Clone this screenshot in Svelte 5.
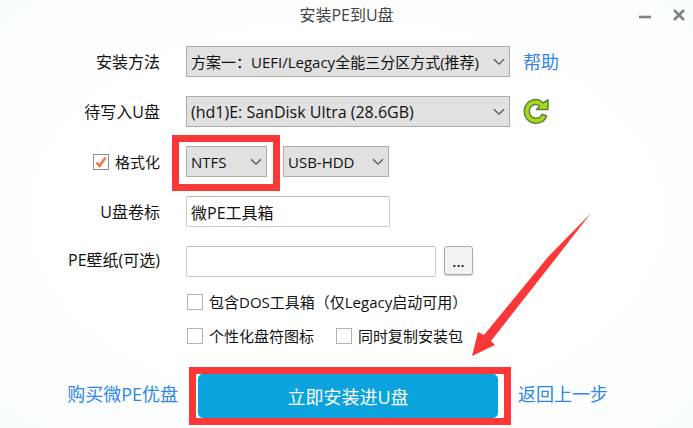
<script lang="ts">
    const methods = ['方案一：UEFI/Legacy全能三分区方式(推荐)'];
    const drives = ['(hd1)E: SanDisk Ultra (28.6GB)'];
    const fileSystems = ['NTFS', 'exFAT', 'FAT32'];
    const bootModes = ['USB-HDD', 'USB-ZIP'];

    let method = $state(methods[0]);
    let drive = $state(drives[0]);
    let format = $state(true);
    let fileSystem = $state('NTFS');
    let bootMode = $state('USB-HDD');
    let volumeLabel = $state('微PE工具箱');
    let wallpaper = $state('');
    let includeDos = $state(false);
    let customIcon = $state(false);
    let copyInstaller = $state(false);
</script>

{#snippet dropdown(id: string, options: string[], value: string, label: string, onpick: (v: string) => void)}
    <div class="select">
        <select {id} {value} aria-label={label} onchange={(e) => onpick(e.currentTarget.value)}>
            {#each options as option}
                <option value={option}>{option}</option>
            {/each}
        </select>
        <svg class="chevron" viewBox="0 0 12 8" aria-hidden="true">
            <path d="M1 1.2 6 6.2l5-5" />
        </svg>
    </div>
{/snippet}

<div class="window">
    <header>
        <h1>安装PE到U盘</h1>
        <div class="window-buttons">
            <button type="button" aria-label="最小化">
                <svg viewBox="0 0 14 14"><path d="M1 9h12" /></svg>
            </button>
            <button type="button" aria-label="关闭">
                <svg viewBox="0 0 14 14"><path d="M2 2l10 10M12 2L2 12" /></svg>
            </button>
        </div>
    </header>

    <form onsubmit={(e) => e.preventDefault()}>
        <div class="row">
            <label class="name" for="method">安装方法</label>
            <div class="field">
                {@render dropdown('method', methods, method, '安装方法', (v) => (method = v))}
                <div class="side"><a href="#help">帮助</a></div>
            </div>
        </div>

        <div class="row">
            <label class="name" for="drive">待写入U盘</label>
            <div class="field">
                {@render dropdown('drive', drives, drive, '待写入U盘', (v) => (drive = v))}
                <div class="side">
                    <button type="button" class="refresh" aria-label="刷新">
                        <svg viewBox="0 0 27 27">
                            <path
                                d="M20 5C18 2.800 15.500 1.500 12.800 1.500 6.300 1.500 1.300 6.800 1.300 13.300S6.300 25.300 12.800 25.300c5 0 9.200-2.900 10.900-7.300l-4.700-1.700c-1 2.500-3.300 4-6 4-3.900 0-6.700-3-6.700-7s2.800-6.900 6.500-6.900c1.600 0 2.900.6 3.900 1.600l-3.200 3.600H25V1.800Z"
                            />
                        </svg>
                    </button>
                </div>
            </div>
        </div>

        <div class="row">
            <label class="name check">
                <input type="checkbox" bind:checked={format} />格式化
            </label>
            <div class="field formats">
                <div class="fs">
                    {@render dropdown('fs', fileSystems, fileSystem, '文件系统', (v) => (fileSystem = v))}
                    <span class="marker"></span>
                </div>
                <div class="mode">
                    {@render dropdown('mode', bootModes, bootMode, '启动模式', (v) => (bootMode = v))}
                </div>
            </div>
        </div>

        <div class="row">
            <label class="name" for="volume">U盘卷标</label>
            <div class="field">
                <input id="volume" class="text volume" type="text" bind:value={volumeLabel} />
            </div>
        </div>

        <div class="row">
            <label class="name raised" for="wallpaper">PE壁纸(可选)</label>
            <div class="field">
                <input id="wallpaper" class="text wallpaper" type="text" bind:value={wallpaper} />
                <button type="button" class="browse">...</button>
            </div>
        </div>

        <div class="options">
            <div class="option-line">
                <label class="check">
                    <input type="checkbox" bind:checked={includeDos} />包含DOS工具箱（仅Legacy启动可用）
                </label>
            </div>
            <div class="option-line">
                <label class="check">
                    <input type="checkbox" bind:checked={customIcon} />个性化盘符图标
                </label>
                <label class="check">
                    <input type="checkbox" bind:checked={copyInstaller} />同时复制安装包
                </label>
            </div>
        </div>

        <footer>
            <a class="buy" href="#buy">购买微PE优盘</a>
            <div class="install">
                <span class="marker"></span>
                <button type="submit">立即安装进U盘</button>
                <svg class="arrow" viewBox="0 0 120 145" aria-hidden="true">
                    <path d="M119 1 76 45 12 123l-6-3L0 144l23-11-4-4L81 50Z" />
                </svg>
            </div>
            <a class="back" href="#back">返回上一步</a>
        </footer>
    </form>
</div>

<style>
    :global(body) {
        margin: 0;
        background: #fff;
    }

    .window {
        min-height: 100vh;
        box-sizing: border-box;
        background: radial-gradient(ellipse at center, #fff 60%, #f8fdff 100%);
        color: #111;
        font-family: "Open Sans", "Noto Sans CJK SC", sans-serif;
        font-size: 16px;
        line-height: 24px;
    }

    button,
    input,
    select {
        box-sizing: border-box;
        margin: 0;
        font-family: inherit;
        color: inherit;
    }

    header {
        display: grid;
        grid-template-columns: 1fr auto 1fr;
        align-items: center;
        height: 30px;
    }

    h1 {
        grid-column: 2;
        margin: 0;
        font-size: 16px;
        font-weight: 400;
        color: #444;
    }

    .window-buttons {
        display: flex;
        justify-content: flex-end;
        gap: 20px;
        padding-right: 7px;
    }

    .window-buttons button {
        display: flex;
        padding: 0;
        border: 0;
        background: none;
    }

    .window-buttons svg {
        width: 14px;
        height: 14px;
        stroke: #808080;
        stroke-width: 2.6;
    }

    form {
        padding-top: 16px;
    }

    .row {
        display: grid;
        grid-template-columns: 160px minmax(0, 1fr);
        gap: 26px;
        align-items: center;
        min-height: 31px;
        margin-bottom: 19px;
    }

    .name {
        justify-self: end;
        white-space: nowrap;
    }

    .raised {
        padding-bottom: 4px;
    }

    .field {
        display: flex;
    }

    .select {
        position: relative;
        flex: 1;
        min-width: 0;
    }

    select {
        display: block;
        width: 100%;
        height: 31px;
        padding: 0 20px 0 4px;
        border: 1px solid #adadad;
        border-radius: 0;
        background: #e1e1e1;
        appearance: none;
        font-size: 15px;
    }

    #drive {
        font-size: 16px;
    }

    .chevron {
        position: absolute;
        top: 12px;
        right: 5px;
        width: 12px;
        height: 8px;
        fill: none;
        stroke: #555;
        stroke-width: 1.3;
        pointer-events: none;
    }

    .side {
        display: flex;
        align-items: center;
        width: 170px;
        padding-left: 13px;
    }

    a {
        color: #2d86e8;
        font-size: 18px;
        text-decoration: none;
        white-space: nowrap;
    }

    .refresh {
        display: flex;
        padding: 0;
        border: 0;
        background: none;
    }

    .refresh svg {
        width: 27px;
        height: 27px;
        fill: #a9d916;
        stroke: #5f8140;
        stroke-width: 1.5;
        stroke-linejoin: round;
    }

    .formats {
        gap: 16px;
    }

    .fs {
        position: relative;
        width: 81px;
    }

    .mode {
        width: 106px;
    }

    .marker {
        position: absolute;
        border: 7px solid #fc3737;
        pointer-events: none;
    }

    .fs .marker {
        inset: -11px -13px -14px -14px;
    }

    .check {
        display: flex;
        align-items: center;
        gap: 6px;
        font-size: 15px;
        white-space: nowrap;
    }

    .check input {
        width: 16px;
        height: 16px;
        border: 1px solid #adb2b8;
        background: #fff;
        appearance: none;
    }

    .check input:checked {
        border-color: #8a9097;
        background: #fff url('data:image/svg+xml,<svg xmlns="http://www.w3.org/2000/svg" viewBox="0 0 14 14"><path d="M2.500 7.500 5.500 11 11.500 2.500" fill="none" stroke="%23ff7148" stroke-width="2.600"/></svg>') center / 14px no-repeat;
    }

    .text {
        height: 31px;
        padding: 0 4px;
        border: 1px solid #ccc;
        border-top-color: #bbb;
        border-radius: 2px;
        background: #fff;
        font-size: 16px;
    }

    .volume {
        width: 204px;
    }

    .wallpaper {
        width: 250px;
    }

    .browse {
        width: 29px;
        height: 29px;
        margin-left: 8px;
        padding: 0;
        border: 1px solid #aaa;
        border-radius: 3px;
        background: #f2f2f2;
        box-shadow: 0 1px 1px #ccc;
        font-size: 15px;
        font-weight: 600;
    }

    .options {
        display: flex;
        flex-direction: column;
        gap: 10px;
        margin: -6px 0 26px 187px;
    }

    .option-line {
        display: flex;
        gap: 22px;
    }

    footer {
        display: grid;
        grid-template-columns: 178px minmax(0, 1fr) 175px;
        gap: 20px;
        align-items: center;
        padding-bottom: 10px;
    }

    .buy {
        justify-self: end;
    }

    .buy,
    .back {
        padding-bottom: 4px;
    }

    .install {
        position: relative;
    }

    .install .marker {
        inset: -7px -13px -7px -9px;
        background: #fff;
    }

    .install button {
        position: relative;
        display: block;
        width: 100%;
        height: 44px;
        border: 0;
        border-radius: 5px;
        background: #0aa3dd;
        color: #fff;
        font-size: 18px;
    }

    .arrow {
        position: absolute;
        right: -94px;
        bottom: 61px;
        width: 120px;
        height: 145px;
        fill: #fc3737;
        pointer-events: none;
    }
</style>
